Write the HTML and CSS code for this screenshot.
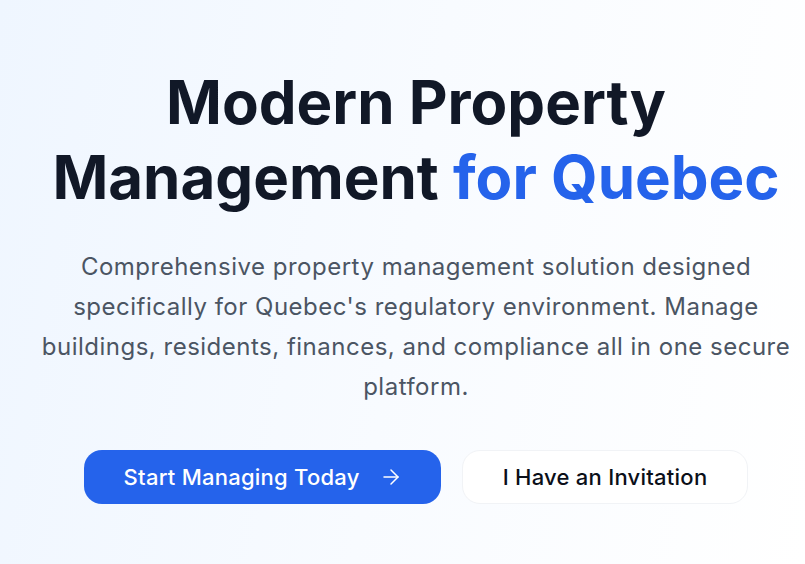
FILE: index.html
```html
<!DOCTYPE html>
<html lang="en">
<head>
<meta charset="utf-8">
<title>Modern Property Management for Quebec</title>
<link rel="stylesheet" href="styles.css">
</head>
<body>
<main class="hero">
  <h1 class="hero-title">Modern Property Management <span class="accent">for Quebec</span></h1>
  <p class="hero-text">Comprehensive property management solution designed specifically for Quebec's regulatory environment. Manage buildings, residents, finances, and compliance all in one secure platform.</p>
  <div class="actions">
    <a class="btn btn-primary" href="#">Start Managing Today
      <svg class="btn-icon" viewBox="0 0 24 24" fill="none" stroke="currentColor" stroke-width="1.5" stroke-linecap="round" stroke-linejoin="round" aria-hidden="true"><path d="M5 12h14"/><path d="m12 5 7 7-7 7"/></svg>
    </a>
    <a class="btn btn-secondary" href="#">I Have an Invitation</a>
  </div>
</main>
</body>
</html>
```
FILE: styles.css
```css
html, body {
  margin: 0;
  height: 100%;
}
body {
  font-family: Inter, "Noto Sans", sans-serif;
  background: linear-gradient(100deg, #eff6ff 0%, #f8fbff 50%, #ffffff 100%);
  color: #111827;
  overflow: hidden;
}
.hero {
  display: flex;
  flex-direction: column;
  align-items: center;
  text-align: center;
  padding: 65px 0 0 27px;
}
.hero-title {
  margin: 0;
  font-size: 60px;
  line-height: 75px;
  font-weight: 700;
  color: #111827;
  letter-spacing: 0;
}
.accent {
  color: #2563eb;
}
.hero-text {
  margin: 32px 0 0;
  max-width: 768px;
  font-size: 24px;
  line-height: 40px;
  letter-spacing: 0.5px;
  color: #4b5563;
}
.actions {
  display: flex;
  gap: 21px;
  margin-top: 43px;
}
.btn {
  display: inline-flex;
  align-items: center;
  justify-content: center;
  height: 54px;
  box-sizing: border-box;
  padding: 0 40px;
  border-radius: 18px;
  font-size: 22px;
  font-weight: 500;
  letter-spacing: 0.25px;
  text-decoration: none;
}
.btn-primary {
  background: #2563eb;
  color: #ffffff;
  gap: 19px;
  padding-right: 38px;
}
.btn-icon {
  width: 24px;
  height: 24px;
}
.btn-secondary {
  background: #ffffff;
  color: #0b0f19;
  border: 1px solid #f1f3f6;
}
```
